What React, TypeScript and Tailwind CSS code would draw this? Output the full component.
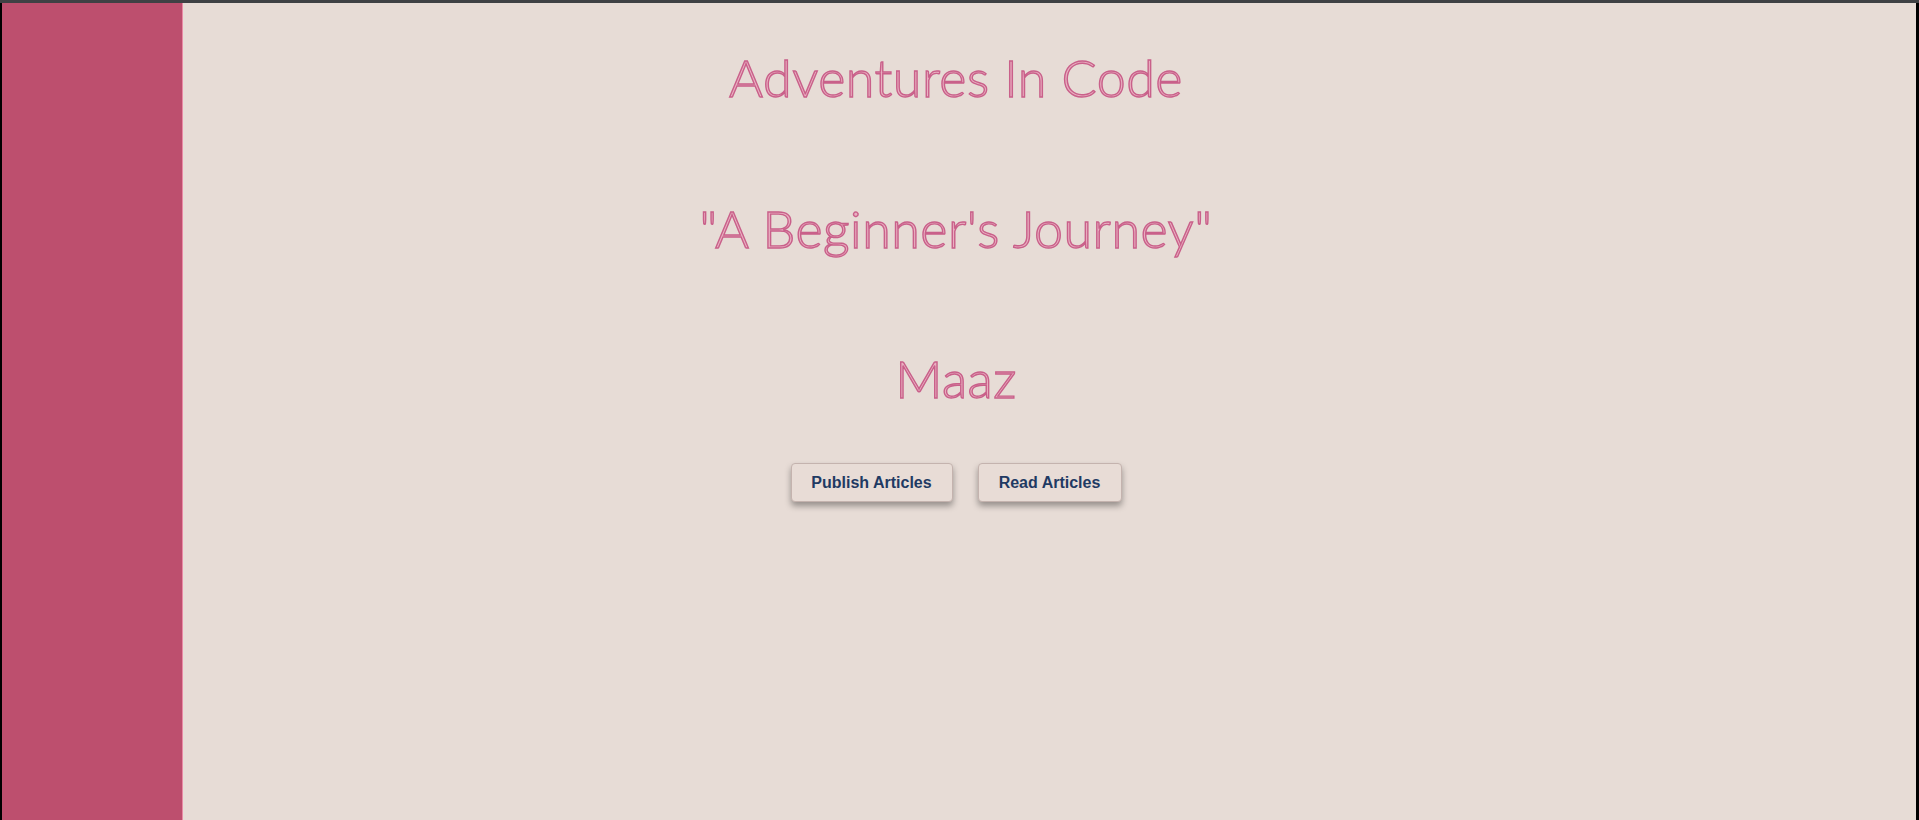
export default function App() {
  const heading =
    "font-['Lato','Open_Sans',sans-serif] font-light text-[52px] leading-none text-[#eab0c1] [-webkit-text-stroke:1.4px_#c9608a] tracking-[0.5px]";

  return (
    <div className="flex h-[820px] w-full flex-col overflow-hidden bg-black">
      <div className="h-[3px] shrink-0 bg-[#3f4144]" />
      <div className="relative flex min-h-0 flex-1 pl-[2px] pr-[3px]">
        {/* fixed side panel lies over the page */}
        <aside className="absolute bottom-0 left-[2px] top-0 w-[181px] border-r border-[#e98aa6] bg-[#bd4f6e]" />
        <main className="flex flex-1 flex-col items-center bg-[#e7dcd6] pr-[6px]">
          <h1 className={`${heading} mt-[48px]`}>Adventures In Code</h1>
          <h2 className={`${heading} mt-[99px]`}>"A Beginner's Journey"</h2>
          <h3 className={`${heading} mt-[98px]`}>Maaz</h3>
          <div className="mt-[59px] flex gap-[25px] font-['Liberation_Sans',Arial,sans-serif]">
            <button className="h-[39px] w-[162px] rounded-[4px] border border-[#c4b3ae] bg-[#e8dcd6] text-[16px] font-bold text-[#1f3a63] shadow-[0_4px_6px_rgba(0,0,0,0.35)]">
              Publish Articles
            </button>
            <button className="h-[39px] w-[144px] rounded-[4px] border border-[#c4b3ae] bg-[#e8dcd6] text-[16px] font-bold text-[#1f3a63] shadow-[0_4px_6px_rgba(0,0,0,0.35)]">
              Read Articles
            </button>
          </div>
        </main>
      </div>
    </div>
  );
}
